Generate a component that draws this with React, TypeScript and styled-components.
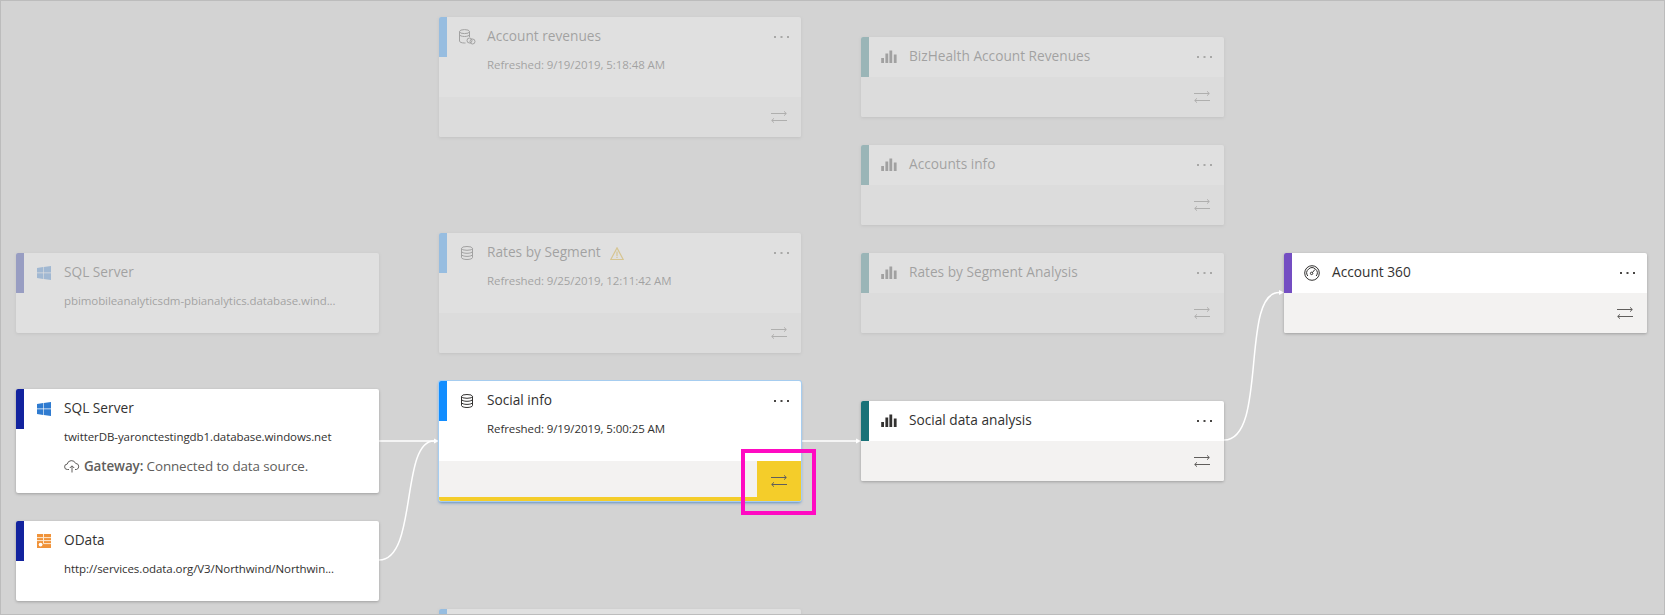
import styled, { createGlobalStyle } from "styled-components";
import type { ReactNode } from "react";

const GlobalStyle = createGlobalStyle`
  html, body {
    margin: 0;
    padding: 0;
    background: #d3d3d3;
    font-family: "Open Sans", "Noto Sans", sans-serif;
  }
`;

const Canvas = styled.div`
  position: relative;
  width: 1665px;
  height: 615px;
  box-sizing: border-box;
  border: 1px solid #bcbcbc;
  overflow: hidden;
  background: #d3d3d3;
`;

// nodes sit on the lineage canvas, offsets include the 1px frame
const Node = styled.div<{ $x: number; $y: number; $w: number; $h: number; $ghost?: boolean; $selected?: boolean }>`
  position: absolute;
  left: ${(p) => p.$x - 1}px;
  top: ${(p) => p.$y - 1}px;
  width: ${(p) => p.$w}px;
  height: ${(p) => p.$h}px;
  display: flex;
  flex-direction: column;
  background: #fff;
  border-radius: 2px;
  overflow: hidden;
  box-shadow: ${(p) =>
    p.$selected
      ? "0 0 0 1px #a6cdf0, 0 2px 3px rgba(0, 90, 180, 0.55)"
      : "0 1px 3px rgba(0, 0, 0, 0.25)"};
  opacity: ${(p) => (p.$ghost ? 0.3 : 1)};
`;

const Header = styled.div`
  flex: 0 0 40px;
  display: flex;
  align-items: center;
`;

const Accent = styled.div<{ $color: string }>`
  align-self: stretch;
  width: 8px;
  background: ${(p) => p.$color};
`;

const IconSlot = styled.div`
  width: 40px;
  display: flex;
  justify-content: center;
  align-items: center;
`;

const Title = styled.div`
  font-size: 13.7px;
  line-height: 18px;
  padding-bottom: 2px;
  font-weight: 500;
  color: #323130;
  white-space: nowrap;
`;

const WarnSlot = styled.div`
  display: flex;
  margin-left: 9px;
`;

const MoreButton = styled.div`
  margin-left: auto;
  margin-right: 12px;
  display: flex;
  color: #484644;
`;

const Details = styled.div`
  flex: 1;
  padding: 1px 0 0 48px;
`;

const Subtitle = styled.div`
  font-size: 11.5px;
  line-height: 14px;
  color: #323130;
  white-space: nowrap;
  letter-spacing: -0.08px;
`;

const GatewayRow = styled.div`
  display: flex;
  align-items: center;
  gap: 4px;
  margin-top: 14px;
  font-size: 13.4px;
  line-height: 16px;
  color: #605e5c;
  white-space: nowrap;
  letter-spacing: -0.1px;

  b {
    font-weight: 600;
  }
`;

const Footer = styled.div<{ $active?: boolean }>`
  flex: 0 0 40px;
  display: flex;
  justify-content: flex-end;
  background: #f3f2f1;
  box-shadow: ${(p) => (p.$active ? "inset 0 -4px 0 #f4cd2a" : "none")};
`;

const RefreshButton = styled.div<{ $active?: boolean }>`
  box-sizing: border-box;
  width: 44px;
  padding-right: 14px;
  display: flex;
  justify-content: flex-end;
  align-items: center;
  background: ${(p) => (p.$active ? "#f4cd2a" : "transparent")};
  color: #605e5c;
`;

const Connectors = styled.svg`
  position: absolute;
  left: -1px;
  top: -1px;
  width: 1665px;
  height: 615px;
  pointer-events: none;
`;

const Highlight = styled.div`
  position: absolute;
  left: 740px;
  top: 448px;
  width: 75px;
  height: 66px;
  box-sizing: border-box;
  border: 4px solid #ff0ac2;
`;

const DatabaseIcon = () => (
  <svg width="14" height="14" viewBox="0 0 14 14" fill="none" stroke="#323130" strokeWidth="1">
    <ellipse cx="7" cy="2.4" rx="5.5" ry="1.9" />
    <path d="M1.5 2.4v9.2c0 1 2.5 1.9 5.5 1.9s5.5-.9 5.5-1.9V2.4" />
    <path d="M1.5 5.4c0 1 2.5 1.9 5.5 1.9s5.5-.9 5.5-1.9M1.5 8.5c0 1 2.5 1.9 5.5 1.9s5.5-.9 5.5-1.9" />
  </svg>
);

const LinkedDatabaseIcon = () => (
  <svg width="18" height="16" viewBox="0 0 18 16" fill="none" stroke="#323130" strokeWidth="1">
    <ellipse cx="6.5" cy="2.6" rx="5" ry="2" />
    <path d="M1.5 2.6V12c0 1.2 2.2 2 5 2h1M11.5 2.6V8" />
    <path d="M1.5 5.5c0 1.1 2.2 2 5 2s5-.9 5-2" />
    <circle cx="11.5" cy="11.5" r="2.5" />
    <circle cx="14.5" cy="12.5" r="2.5" />
  </svg>
);

const WindowsIcon = () => (
  <svg width="14" height="14" viewBox="0 0 14 14" fill="#2f7bd0">
    <path d="M0 2.1 6.2 1.1v5.5H0zM6.8 1 14 0v6.6H6.8zM0 7.2h6.2v5.7L0 11.9zM6.8 7.2H14V14l-7.2-1z" />
  </svg>
);

const ODataIcon = () => (
  <svg width="14" height="14" viewBox="0 0 14 14">
    <rect width="14" height="14" fill="#f0933a" />
    <path d="M0 3.6h14M0 6.6h14M6.5 9.6H14M6.5 0v9.6" stroke="#fde9d3" strokeWidth="1" />
    <circle cx="3.6" cy="10.6" r="1.9" fill="#fff" />
  </svg>
);

const ChartIcon = () => (
  <svg width="16" height="14" viewBox="0 0 16 14" fill="#323130">
    <rect x="0.2" y="8" width="2.8" height="5" />
    <rect x="4.4" y="3.5" width="2.8" height="9.5" />
    <rect x="8.4" y="0.5" width="2.8" height="12.5" />
    <rect x="12.8" y="4.5" width="2.8" height="8.5" />
  </svg>
);

const GaugeIcon = () => (
  <svg width="16" height="16" viewBox="0 0 16 16" fill="none" stroke="#323130" strokeWidth="1">
    <circle cx="8" cy="8" r="7.3" />
    <path d="M3.8 11A5.2 5.2 0 1 1 12.2 11" />
    <circle cx="7.6" cy="8.4" r="1.2" />
    <path d="M8.4 7.6 10.8 4.6" />
  </svg>
);

const WarningIcon = () => (
  <svg width="14" height="13" viewBox="0 0 14 13" fill="none" stroke="#e0a800" strokeWidth="1.2">
    <path d="M7 .9 13.2 12.5H.8z" />
    <path d="M7 4.5v4.4M7 9.8v1.2" />
  </svg>
);

const CloudIcon = () => (
  <svg width="16" height="13" viewBox="0 0 16 13" fill="none" stroke="#605e5c" strokeWidth="1">
    <path d="M5 9.5H3.4A2.7 2.7 0 0 1 3.2 4.1 4.4 4.4 0 0 1 11.6 3.4 3.1 3.1 0 0 1 12.4 9.5H11" />
    <path d="M8 12.5V6M5.8 8 8 5.8 10.2 8" />
  </svg>
);

const MoreIcon = () => (
  <svg width="15" height="2" viewBox="0 0 15 2" fill="currentColor">
    <rect x="0" width="2" height="2" />
    <rect x="6.5" width="2" height="2" />
    <rect x="13" width="2" height="2" />
  </svg>
);

const TransferIcon = () => (
  <svg width="16" height="12" viewBox="0 0 16 12" fill="none" stroke="currentColor" strokeWidth="1">
    <path d="M0 2.5h15.2M13 .3 15.3 2.5 13 4.7" />
    <path d="M16 9.5H.8M3 7.3.7 9.5 3 11.7" />
  </svg>
);

type LineageNodeProps = {
  x: number;
  y: number;
  w?: number;
  h: number;
  accent: string;
  icon?: ReactNode;
  title?: string;
  warning?: boolean;
  ghost?: boolean;
  selected?: boolean;
  more?: boolean;
  footer?: boolean;
  children?: ReactNode;
};

function LineageNode({ x, y, w = 363, h, accent, icon, title, warning, ghost, selected, more, footer, children }: LineageNodeProps) {
  return (
    <Node $x={x} $y={y} $w={w} $h={h} $ghost={ghost} $selected={selected}>
      <Header>
        <Accent $color={accent} />
        <IconSlot>{icon}</IconSlot>
        <Title>{title}</Title>
        {warning && (
          <WarnSlot>
            <WarningIcon />
          </WarnSlot>
        )}
        {more && (
          <MoreButton>
            <MoreIcon />
          </MoreButton>
        )}
      </Header>
      {children !== undefined && <Details>{children}</Details>}
      {footer && (
        <Footer $active={selected}>
          <RefreshButton $active={selected}>
            <TransferIcon />
          </RefreshButton>
        </Footer>
      )}
    </Node>
  );
}

const NAVY = "#12239e";
const BLUE = "#118dff";
const TEAL = "#197278";
const PURPLE = "#744ec2";

export default function App() {
  return (
    <>
      <GlobalStyle />
      <Canvas>
        <Connectors viewBox="0 0 1665 615" fill="none" stroke="#fff" strokeWidth="1.5">
          <path d="M379 441H434" />
          <path d="M379 560C418 560 400 441 434 441" />
          <path d="M801 441H856" />
          <path d="M1224 440C1268 440 1240 292.5 1279 292.5" />
          <path d="M434 438.5 439 441 434 443.5zM856 438.5 861 441 856 443.5zM1279 290 1284 292.5 1279 295z" fill="#fff" stroke="none" />
        </Connectors>

        <LineageNode x={16} y={253} h={80} accent={NAVY} icon={<WindowsIcon />} title="SQL Server" ghost>
          <Subtitle>pbimobileanalyticsdm-pbianalytics.database.wind...</Subtitle>
        </LineageNode>
        <LineageNode x={16} y={389} h={104} accent={NAVY} icon={<WindowsIcon />} title="SQL Server">
          <Subtitle>twitterDB-yaronctestingdb1.database.windows.net</Subtitle>
          <GatewayRow>
            <CloudIcon />
            <span>
              <b>Gateway:</b> Connected to data source.
            </span>
          </GatewayRow>
        </LineageNode>
        <LineageNode x={16} y={521} h={80} accent={NAVY} icon={<ODataIcon />} title="OData">
          <Subtitle>http://services.odata.org/V3/Northwind/Northwin...</Subtitle>
        </LineageNode>

        <LineageNode x={439} y={17} w={362} h={120} accent={BLUE} icon={<LinkedDatabaseIcon />} title="Account revenues" ghost more footer>
          <Subtitle>Refreshed: 9/19/2019, 5:18:48 AM</Subtitle>
        </LineageNode>
        <LineageNode x={439} y={233} w={362} h={120} accent={BLUE} icon={<DatabaseIcon />} title="Rates by Segment" warning ghost more footer>
          <Subtitle>Refreshed: 9/25/2019, 12:11:42 AM</Subtitle>
        </LineageNode>
        <LineageNode x={439} y={381} w={362} h={120} accent={BLUE} icon={<DatabaseIcon />} title="Social info" selected more footer>
          <Subtitle>Refreshed: 9/19/2019, 5:00:25 AM</Subtitle>
        </LineageNode>
        <LineageNode x={439} y={609} w={362} h={120} accent={BLUE} ghost />

        <LineageNode x={861} y={37} h={80} accent={TEAL} icon={<ChartIcon />} title="BizHealth Account Revenues" ghost more footer />
        <LineageNode x={861} y={145} h={80} accent={TEAL} icon={<ChartIcon />} title="Accounts info" ghost more footer />
        <LineageNode x={861} y={253} h={80} accent={TEAL} icon={<ChartIcon />} title="Rates by Segment Analysis" ghost more footer />
        <LineageNode x={861} y={401} h={80} accent={TEAL} icon={<ChartIcon />} title="Social data analysis" more footer />

        <LineageNode x={1284} y={253} h={80} accent={PURPLE} icon={<GaugeIcon />} title="Account 360" more footer />

        <Highlight />
      </Canvas>
    </>
  );
}
